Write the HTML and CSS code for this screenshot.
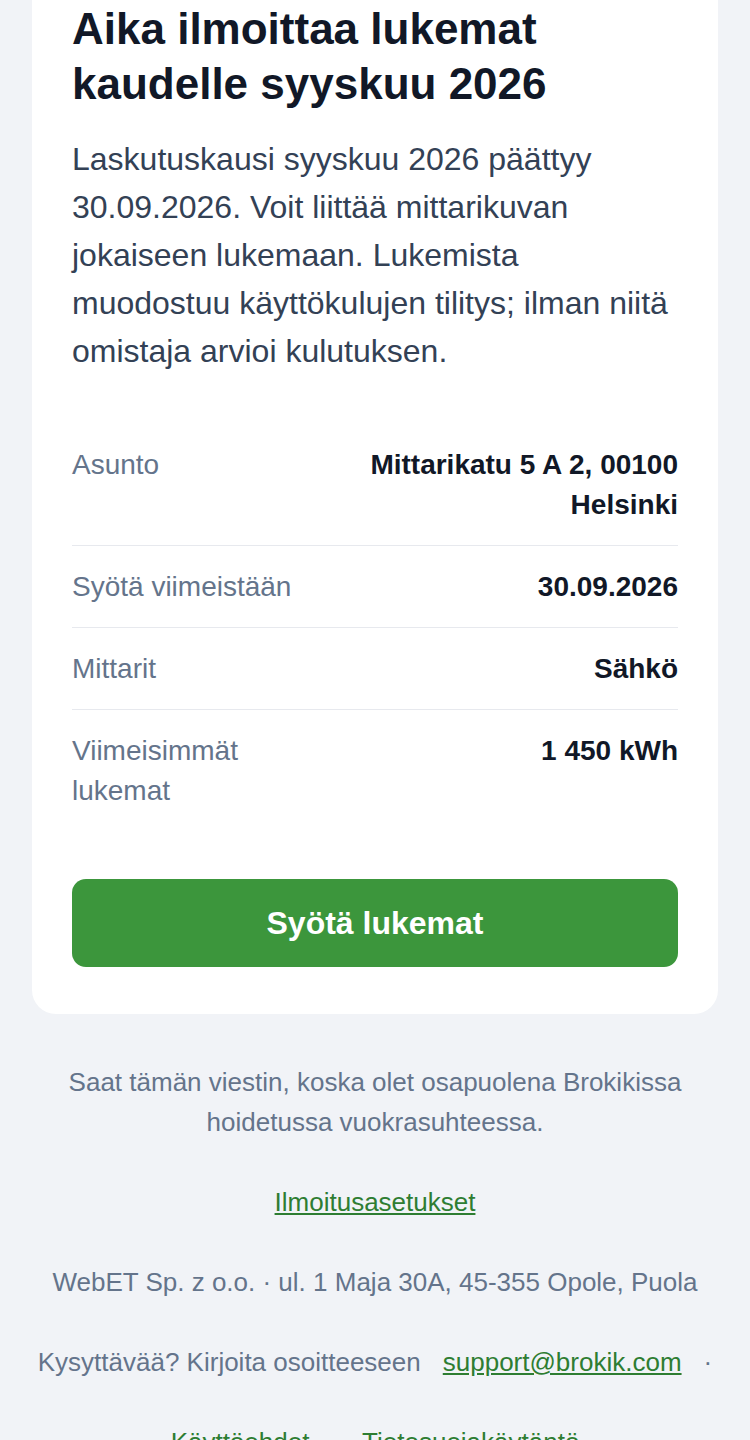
FILE: index.html
```html
<!DOCTYPE html>
<html lang="fi">
<head>
    <meta charset="UTF-8">
    <meta name="viewport" content="width=device-width, initial-scale=1.0">
    <title>Brokik - Lukemat</title>
    <link rel="stylesheet" href="styles.css">
</head>
<body>
    <div class="card">
        <h1>Aika ilmoittaa lukemat kaudelle syyskuu 2026</h1>
        <p class="intro">Laskutuskausi syyskuu 2026 päättyy 30.09.2026. Voit liittää mittarikuvan jokaiseen lukemaan. Lukemista muodostuu käyttökulujen tilitys; ilman niitä omistaja arvioi kulutuksen.</p>

        <table class="details">
            <tr>
                <td class="label">Asunto</td>
                <td class="value">Mittarikatu 5 A 2, 00100 Helsinki</td>
            </tr>
            <tr>
                <td class="label">Syötä viimeistään</td>
                <td class="value">30.09.2026</td>
            </tr>
            <tr>
                <td class="label">Mittarit</td>
                <td class="value">Sähkö</td>
            </tr>
            <tr>
                <td class="label">Viimeisimmät lukemat</td>
                <td class="value">1 450 kWh</td>
            </tr>
        </table>

        <a class="button" href="#">Syötä lukemat</a>
    </div>

    <div class="footer">
        <p>Saat tämän viestin, koska olet osapuolena Brokikissa hoidetussa vuokrasuhteessa.</p>
        <p><a href="#">Ilmoitusasetukset</a></p>
        <p>WebET Sp. z o.o. · ul. 1 Maja 30A, 45-355 Opole, Puola</p>
        <div class="links">
            <span>Kysyttävää? Kirjoita osoitteeseen</span>
            <a href="#">support@brokik.com</a>
            <span>·</span>
            <a href="#">Käyttöehdot</a>
            <span>·</span>
            <a href="#">Tietosuojakäytäntö</a>
        </div>
    </div>
</body>
</html>
```

FILE: styles.css
```css
body {
    margin: 0;
    font-family: "Liberation Sans", Arial, sans-serif;
    background-color: #f1f3f7;
    color: #334155;
}
.card {
    margin: 0 32px;
    padding: 1px 40px 47px;
    background-color: #ffffff;
    border-radius: 0 0 24px 24px;
}
h1 {
    margin: 0;
    font-size: 44px;
    line-height: 55px;
    font-weight: bold;
    color: #111827;
}
.intro {
    margin: 24px 0 49px;
    font-size: 32px;
    line-height: 48px;
}
.details {
    width: 100%;
    border-collapse: collapse;
    font-size: 28px;
    line-height: 40px;
}
.details td {
    padding: 20.5px 0;
    vertical-align: top;
    border-bottom: 1px solid #e7e9ee;
}
.details tr:last-child td {
    border-bottom: none;
}
.label {
    width: 40%;
    color: #64748b;
}
.value {
    text-align: right;
    font-weight: bold;
    color: #111827;
}
.button {
    display: block;
    margin-top: 48px;
    height: 88px;
    line-height: 88px;
    border-radius: 14px;
    background-color: #3c963c;
    color: #ffffff;
    text-align: center;
    text-decoration: none;
    font-size: 32px;
    font-weight: bold;
}
.footer {
    padding: 48px 32px;
    text-align: center;
    font-size: 26px;
    line-height: 40px;
    color: #64748b;
}
.footer p {
    margin: 0 0 40px;
}
.footer a {
    color: #2e7d32;
}
.links {
    display: flex;
    flex-wrap: wrap;
    justify-content: center;
    column-gap: 22px;
    row-gap: 40px;
}
```
